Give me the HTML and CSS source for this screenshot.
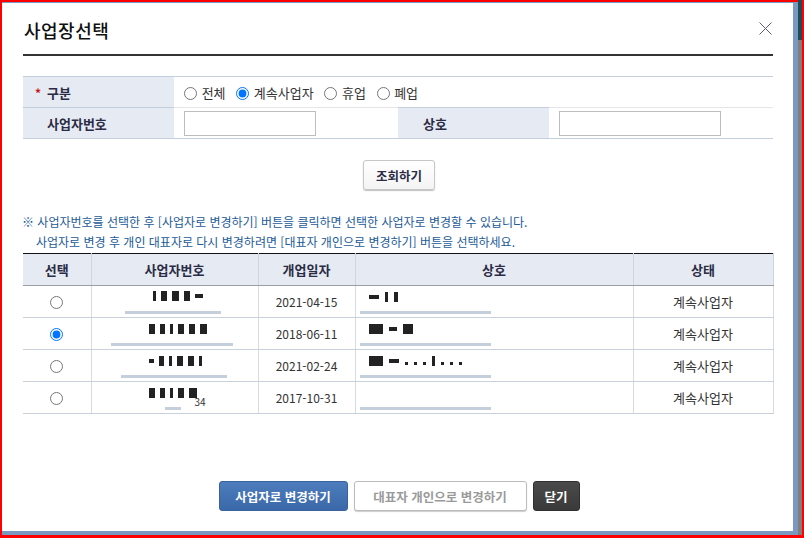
FILE: index.html
```html
<!DOCTYPE html>
<html lang="ko">
<head>
  <meta charset="UTF-8" />
  <title>사업장선택</title>
  <link rel="stylesheet" href="styles.css">
</head>
<body>
  <div class="screen">
    <div class="modal">
      <!-- Header -->
      <div class="modal-header">
        <h1 class="modal-title">사업장선택</h1>
        <button class="close-btn" aria-label="닫기">
          <svg width="13" height="13" viewBox="0 0 13 13">
            <path d="M0.5 0.5 L12.5 12.5 M12.5 0.5 L0.5 12.5" stroke="#5a5f75" stroke-width="1" fill="none" />
          </svg>
        </button>
      </div>

      <!-- Search form -->
      <table class="form-table">
        <colgroup>
          <col style="width:151px"><col style="width:224px"><col style="width:151px"><col style="width:224px">
        </colgroup>
        <tr>
          <th class="label"><span class="req">*</span>구분</th>
          <td colspan="3" class="radios">
            <label><input type="radio" name="type"> 전체</label>
            <label><input type="radio" name="type" checked> 계속사업자</label>
            <label><input type="radio" name="type"> 휴업</label>
            <label><input type="radio" name="type"> 폐업</label>
          </td>
        </tr>
        <tr>
          <th class="label">사업자번호</th>
          <td><input type="text" class="text-input"></td>
          <th class="label label-center">상호</th>
          <td><input type="text" class="text-input"></td>
        </tr>
      </table>

      <div class="search-row">
        <button class="btn btn-white">조회하기</button>
      </div>

      <p class="notice">
        ※ 사업자번호를 선택한 후 [사업자로 변경하기] 버튼을 클릭하면 선택한 사업자로 변경할 수 있습니다.<br>
        <span class="indent">사업자로 변경 후 개인 대표자로 다시 변경하려면 [대표자 개인으로 변경하기] 버튼을 선택하세요.</span>
      </p>

      <!-- Result list -->
      <table class="grid">
        <colgroup>
          <col style="width:68px"><col style="width:167px"><col style="width:97px"><col style="width:278px"><col style="width:140px">
        </colgroup>
        <thead>
          <tr>
            <th>선택</th>
            <th>사업자번호</th>
            <th>개업일자</th>
            <th>상호</th>
            <th>상태</th>
          </tr>
        </thead>
        <tbody>
          <tr>
            <td><input type="radio" name="biz"></td>
            <td class="masked">
              <div class="redact r1"><i style="width:3px"></i><i style="width:6px"></i><i style="width:7px"></i><i style="width:6px"></i><i class="low" style="width:8px"></i></div>
              <div class="bar" style="left:33px;width:96px"></div>
            </td>
            <td>2021-04-15</td>
            <td class="masked name">
              <div class="redact rn"><i class="low" style="width:10px"></i><i style="width:3px"></i><i style="width:4px"></i></div>
              <div class="bar" style="left:4px;width:131px"></div>
            </td>
            <td class="status">계속사업자</td>
          </tr>
          <tr>
            <td><input type="radio" name="biz" checked></td>
            <td class="masked">
              <div class="redact r2"><i style="width:6px"></i><i style="width:5px"></i><i style="width:3px"></i><i style="width:6px"></i><i style="width:6px"></i><i style="width:7px"></i></div>
              <div class="bar" style="left:19px;width:122px"></div>
            </td>
            <td>2018-06-11</td>
            <td class="masked name">
              <div class="redact rn"><i style="width:14px"></i><i class="low" style="width:8px"></i><i style="width:10px"></i></div>
              <div class="bar" style="left:4px;width:131px"></div>
            </td>
            <td class="status">계속사업자</td>
          </tr>
          <tr>
            <td><input type="radio" name="biz"></td>
            <td class="masked">
              <div class="redact r2"><i class="low" style="width:5px"></i><i style="width:5px"></i><i style="width:3px"></i><i style="width:6px"></i><i style="width:6px"></i><i style="width:3px"></i></div>
              <div class="bar" style="left:29px;width:106px"></div>
            </td>
            <td>2021-02-24</td>
            <td class="masked name">
              <div class="redact rn"><i style="width:14px"></i><i class="low" style="width:10px"></i><i class="dot"></i><i class="dot"></i><i class="dot"></i><i style="width:3px"></i><i class="dot"></i><i class="dot"></i><i class="dot"></i></div>
              <div class="bar" style="left:4px;width:131px"></div>
            </td>
            <td class="status">계속사업자</td>
          </tr>
          <tr>
            <td><input type="radio" name="biz"></td>
            <td class="masked">
              <div class="redact r2"><i style="width:6px"></i><i style="width:5px"></i><i style="width:3px"></i><i style="width:6px"></i><i style="width:8px"></i><span class="tail">34</span></div>
              <div class="bar" style="left:73px;width:16px"></div>
            </td>
            <td>2017-10-31</td>
            <td class="masked name">
              <div class="bar" style="left:4px;width:131px"></div>
            </td>
            <td class="status">계속사업자</td>
          </tr>
        </tbody>
      </table>

      <!-- Footer buttons -->
      <div class="footer">
        <button class="btn btn-blue">사업자로 변경하기</button>
        <button class="btn btn-disabled">대표자 개인으로 변경하기</button>
        <button class="btn btn-dark">닫기</button>
      </div>
    </div>
    <div class="gap"></div>
    <div class="scrollbar"><div class="thumb"></div></div>
  </div>
</body>
</html>
```

FILE: styles.css
```css
* {
  margin: 0;
  padding: 0;
  box-sizing: border-box;
}

body {
  font-family: "Noto Sans CJK KR", "Noto Sans", sans-serif;
  font-size: 12px;
  color: #333;
  background-color: #fff;
}

.screen {
  width: 804px;
  height: 538px;
  border: 2px solid #ff0000;
  border-bottom-width: 3px;
  background-color: #7b98c0;
  display: flex;
}

.modal {
  width: 791px;
  height: 528px;
  margin-top: 1px;
  background-color: #fff;
  padding: 0 20px 0 21px;
}

.gap {
  width: 5px;
}

.scrollbar {
  width: 4px;
  margin-top: -2px;
  background-color: #7e7e7e;
}

.scrollbar .thumb {
  height: 40px;
  background-color: #1d4d58;
}

/* Header */
.modal-header {
  display: flex;
  justify-content: space-between;
  align-items: center;
  height: 53px;
  padding-top: 2px;
  border-bottom: 2px solid #333;
}

.modal-title {
  font-size: 18px;
  font-weight: 500;
  color: #111;
  letter-spacing: 0.5px;
  padding-left: 1px;
}

.close-btn {
  background: none;
  border: none;
  width: 13px;
  height: 13px;
  margin-right: 1px;
  margin-top: -3px;
  cursor: pointer;
}

.close-btn svg {
  display: block;
}

/* Search form */
.form-table {
  width: 750px;
  margin-top: 20px;
  border-collapse: collapse;
  table-layout: fixed;
  border-top: 1px solid #c3cfdc;
  border-bottom: 1px solid #c3cfdc;
}

.form-table tr + tr th,
.form-table tr + tr td {
  border-top: 1px solid #e6e6e6;
}

.form-table tr + tr th {
  border-top-color: #c3cfdc;
}

.form-table th,
.form-table td {
  height: 31px;
  padding: 0;
  vertical-align: middle;
}

.form-table .label {
  background-color: #e6ebf3;
  font-weight: bold;
  color: #2b2b45;
  text-align: left;
  padding-left: 24px;
  font-size: 13px;
}

.form-table .label-center {
  padding-left: 25px;
}

.form-table .req {
  color: #c8161d;
  margin-left: -12px;
  margin-right: 6px;
  font-size: 12px;
}

.radios {
  padding-left: 9px !important;
  font-size: 13px;
}

.radios label {
  margin-right: 6px;
  white-space: nowrap;
}

input[type="radio"] {
  width: 13px;
  height: 13px;
  vertical-align: -2px;
  margin: 0 1px 0 1px;
}

.text-input {
  display: block;
  width: 132px;
  height: 25px;
  margin-left: 10px;
  border: 1px solid #bdbdbd;
}

.form-table td:last-child .text-input {
  width: 162px;
}

/* Search button */
.search-row {
  display: flex;
  justify-content: center;
  margin-top: 21px;
  padding-left: 2px;
}

.btn {
  font-family: inherit;
  font-size: 12.5px;
  font-weight: bold;
  height: 30px;
  border-radius: 3px;
  cursor: pointer;
  padding: 0 11px;
}

.btn-white {
  width: 72px;
  background: linear-gradient(#fff, #f4f4f4);
  border: 1px solid #c6c6c6;
  box-shadow: 0 1px 1px rgba(0, 0, 0, 0.25);
  color: #2b2b45;
}

/* Notice */
.notice {
  margin-top: 22px;
  margin-left: -1px;
  line-height: 20px;
  color: #1b5b98;
  font-size: 12px;
  white-space: nowrap;
}

.notice .indent {
  padding-left: 14px;
}

/* Result grid */
.grid {
  width: 750px;
  margin-top: 1px;
  border-collapse: collapse;
  table-layout: fixed;
  border-top: 1px solid #111;
}

.grid th {
  height: 32px;
  background-color: #e6ebf3;
  font-weight: bold;
  color: #2b2b45;
  font-size: 13px;
  border-left: 1px solid #d0d6df;
  border-right: 1px solid #d0d6df;
  border-bottom: 1px solid #9a9ea6;
}

.grid th:first-child,
.grid td:first-child {
  border-left: none;
}

.grid td {
  height: 32px;
  text-align: center;
  vertical-align: middle;
  border: 1px solid #d5dbe3;
  border-top: none;
  border-bottom: 1px solid #c8d0da;
  font-size: 12px;
  color: #333;
}

.grid td.status {
  font-size: 13px;
}

.grid td.masked {
  position: relative;
  text-align: left;
}

/* redacted blocks over number and name */
.redact {
  position: absolute;
  display: flex;
  align-items: flex-start;
  gap: 5px;
  top: 5px;
}

.redact.r1 {
  left: 61px;
}

.redact.r2 {
  left: 57px;
  top: 6px;
}

.redact.rn {
  left: 13px;
  top: 6px;
  gap: 6px;
}

.redact i {
  display: block;
  height: 10px;
  background-color: #222;
}

.redact i.low {
  height: 4px;
  margin-top: 3px;
}

.redact i.dot {
  width: 3px;
  height: 3px;
  margin-top: 6px;
}

.redact .tail {
  font-size: 10px;
  line-height: 10px;
  margin: 9px 0 0 -7px;
  color: #333;
}

.bar {
  position: absolute;
  bottom: 3px;
  height: 3px;
  background-color: #c5cfdb;
}

/* Footer */
.footer {
  display: flex;
  justify-content: center;
  gap: 6px;
  margin-top: 67px;
  padding-left: 2px;
}

.btn-blue {
  background: linear-gradient(#4d7dbd, #3a68a8);
  border: 1px solid #3a629b;
  color: #fff;
  width: 129px;
}

.btn-disabled {
  background: #fff;
  border: 1px solid #bcbcbc;
  box-shadow: 0 1px 1px rgba(0, 0, 0, 0.2);
  color: #9a9a9a;
  width: 173px;
}

.btn-dark {
  background: linear-gradient(#4a4a4a, #3a3a3a);
  border: 1px solid #2f2f2f;
  color: #fff;
  width: 47px;
}
```
